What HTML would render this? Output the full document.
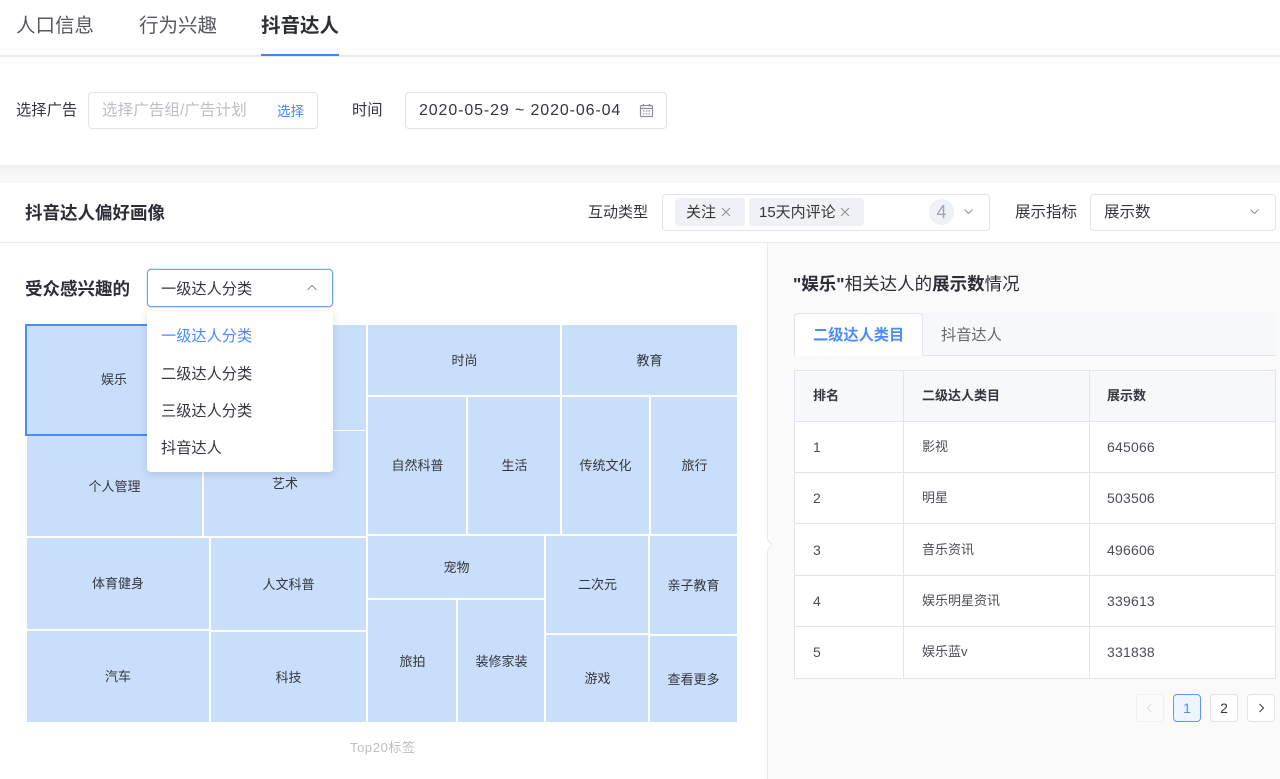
<!DOCTYPE html>
<html><head><meta charset="utf-8">
<style>
html,body{margin:0;padding:0;background:#fff}
body{width:1280px;height:779px;position:relative;overflow:hidden;font-family:"Liberation Sans","Noto Sans CJK SC",sans-serif;color:#33373d}
div,span{position:absolute;box-sizing:border-box;white-space:nowrap}
.t{line-height:20px}
.c{background:#c9defb;display:flex;align-items:center;justify-content:center;font-size:13px;color:#33373d;padding-bottom:2px}
.r{padding-left:1px}
.box{background:#fff;border:1px solid #e1e4ea;border-radius:4px}
.line{background:#e1e4ea}
.cell{font-size:13px;line-height:20px;color:#4a4e55}
.n{font-size:14px;letter-spacing:.2px}
.b{font-weight:bold}
b{font-weight:bold}
</style></head><body>
<!-- tabs -->
<div class="t" style="left:16px;top:14px;font-size:19.500px;line-height:24px;color:#55595f">人口信息</div>
<div class="t" style="left:139px;top:14px;font-size:19.500px;line-height:24px;color:#55595f">行为兴趣</div>
<div class="t b" style="left:261px;top:14px;font-size:19.500px;line-height:24px;color:#2b2f35">抖音达人</div>
<div style="left:0;top:55px;width:1280px;height:2px;background:#e9ebf0"></div>
<div style="left:261px;top:54px;width:78px;height:2px;background:#3f86fa"></div>
<!-- filter -->
<div class="t" style="left:16px;top:101px;font-size:15.300px;color:#33373d">选择广告</div>
<div class="box" style="left:88px;top:92px;width:230px;height:37px"></div>
<div class="t" style="left:102px;top:101px;font-size:15.600px;color:#bcbec2">选择广告组/广告计划</div>
<div class="t" style="left:277px;top:102px;font-size:13.500px;color:#3f86fa">选择</div>
<div class="t" style="left:352px;top:101px;font-size:15.300px;color:#33373d">时间</div>
<div class="box" style="left:405px;top:92px;width:262px;height:37px"></div>
<div class="t" style="left:419px;top:101px;font-size:16px;color:#33373d;letter-spacing:.88px">2020-05-29 ~ 2020-06-04</div>
<svg style="position:absolute;left:639px;top:103px" width="15" height="15" viewBox="0 0 15 15" fill="none" stroke="#8d9096" stroke-width="1.200"><rect x="1.500" y="2.500" width="12" height="11" rx="1"/><path d="M1.500 5.500h12M4.500 1v2.500M10.500 1v2.500M4 8h1.500M6.800 8h1.500M9.600 8h1.500M4 10.800h1.500M6.800 10.800h1.500M9.600 10.800h1.500"/></svg>
<!-- gray band -->
<div style="left:0;top:165px;width:1280px;height:18px;background:linear-gradient(#eeeff1,#f7f7f8 6px,#f8f8f9)"></div>
<!-- section header -->
<div class="t b" style="left:25px;top:202px;font-size:17.500px;color:#2b2f35;line-height:22px">抖音达人偏好画像</div>
<div class="t" style="left:588px;top:203px;font-size:15px">互动类型</div>
<div class="box" style="left:662px;top:194px;width:328px;height:37px"></div>
<div style="left:675px;top:198px;width:70px;height:28px;background:#eef1f6;border-radius:4px"></div>
<div class="t" style="left:686px;top:203px;font-size:15px">关注</div>
<svg style="position:absolute;left:721px;top:207px" width="10" height="10" viewBox="0 0 10 10" stroke="#8d9096" stroke-width="1"><path d="M1 1l8 8M9 1l-8 8"/></svg>
<div style="left:749px;top:198px;width:115px;height:28px;background:#eef1f6;border-radius:4px"></div>
<div class="t" style="left:759px;top:203px;font-size:15px">15天内评论</div>
<svg style="position:absolute;left:840px;top:207px" width="10" height="10" viewBox="0 0 10 10" stroke="#8d9096" stroke-width="1"><path d="M1 1l8 8M9 1l-8 8"/></svg>
<div style="left:929px;top:199px;width:25px;height:26px;background:#eef1f6;border-radius:13px;text-align:center;font-size:18px;line-height:26px;color:#a1a4a9">4</div>
<svg style="position:absolute;left:963px;top:208px" width="11" height="8" viewBox="0 0 11 8" fill="none" stroke="#8d9096"><path d="M1.500 1.500l4 4 4-4"/></svg>
<div class="t" style="left:1015px;top:203px;font-size:15.500px">展示指标</div>
<div class="box" style="left:1090px;top:194px;width:186px;height:37px"></div>
<div class="t" style="left:1104px;top:203px;font-size:15.500px">展示数</div>
<svg style="position:absolute;left:1249px;top:208px" width="11" height="8" viewBox="0 0 11 8" fill="none" stroke="#8d9096"><path d="M1.500 1.500l4 4 4-4"/></svg>
<div style="left:0;top:242px;width:1280px;height:1px;background:#e9ebf0"></div>
<!-- right panel bg -->
<div style="left:767px;top:243px;width:513px;height:536px;background:#fafafb;border-left:1px solid #e9ebf0"></div>
<svg style="position:absolute;left:766px;top:538px" width="8" height="14" viewBox="0 0 8 14" fill="#fff" stroke="#e9ebf0"><path d="M1 1l5 6-5 6"/></svg>
<!-- left heading -->
<div class="t b" style="left:25px;top:278px;font-size:17.500px;color:#2b2f35;line-height:22px">受众感兴趣的</div>
<!-- treemap -->
<div class="c" style="left:25px;top:324px;width:178px;height:112px;border:2px solid #4a8df8;padding-bottom:3px">娱乐</div>
<div class="c" style="left:204px;top:325px;width:162px;height:105px"></div>
<div class="c" style="left:27px;top:436px;width:175px;height:100px">个人管理</div>
<div class="c" style="left:204px;top:431px;width:162px;height:105px">艺术</div>
<div class="c" style="left:27px;top:538px;width:182px;height:91px">体育健身</div>
<div class="c" style="left:211px;top:538px;width:155px;height:92px">人文科普</div>
<div class="c" style="left:27px;top:631px;width:182px;height:91px">汽车</div>
<div class="c" style="left:211px;top:632px;width:155px;height:90px">科技</div>
<div class="c r" style="left:368px;top:325px;width:192px;height:70px">时尚</div>
<div class="c" style="left:562px;top:325px;width:175px;height:70px">教育</div>
<div class="c r" style="left:368px;top:397px;width:98px;height:137px">自然科普</div>
<div class="c r" style="left:468px;top:397px;width:92px;height:137px">生活</div>
<div class="c" style="left:562px;top:397px;width:87px;height:137px">传统文化</div>
<div class="c r" style="left:651px;top:397px;width:86px;height:137px">旅行</div>
<div class="c r" style="left:368px;top:536px;width:176px;height:62px">宠物</div>
<div class="c r" style="left:368px;top:600px;width:88px;height:122px">旅拍</div>
<div class="c r" style="left:458px;top:600px;width:86px;height:122px">装修家装</div>
<div class="c r" style="left:546px;top:536px;width:102px;height:97px">二次元</div>
<div class="c" style="left:650px;top:536px;width:87px;height:98px">亲子教育</div>
<div class="c r" style="left:546px;top:635px;width:102px;height:87px">游戏</div>
<div class="c" style="left:650px;top:636px;width:87px;height:86px">查看更多</div>
<div class="t" style="left:350px;top:738px;font-size:13px;color:#bcbec2;letter-spacing:.6px">Top20标签</div>
<!-- select + dropdown -->
<div style="left:147px;top:269px;width:186px;height:38px;background:#fff;border:1px solid #6ea4fb;border-radius:4px;box-shadow:0 0 0 1px #dbe8fd"></div>
<div class="t" style="left:161px;top:280px;font-size:15.200px">一级达人分类</div>
<svg style="position:absolute;left:306px;top:284px" width="12" height="8" viewBox="0 0 12 8" fill="none" stroke="#8d9096"><path d="M1.500 6l4.500-4.500 4.500 4.500"/></svg>
<div style="left:147px;top:311px;width:186px;height:161px;background:#fff;border-radius:4px;box-shadow:0 2px 8px rgba(40,50,70,.16)"></div>
<div class="t" style="left:161px;top:327px;font-size:15.200px;color:#4a8df8">一级达人分类</div>
<div class="t" style="left:161px;top:365px;font-size:15.200px">二级达人分类</div>
<div class="t" style="left:161px;top:402px;font-size:15.200px">三级达人分类</div>
<div class="t" style="left:161px;top:439px;font-size:15.200px">抖音达人</div>
<!-- right heading -->
<div class="t" style="left:793px;top:273px;font-size:17.500px;color:#2b2f35;line-height:22px"><b>"娱乐"</b>相关达人的<b>展示数</b>情况</div>
<!-- right tabs -->
<div style="left:794px;top:313px;width:482px;height:43px;background:#f7f8fa;border-bottom:1px solid #e1e4ea"></div>
<div style="left:794px;top:313px;width:129px;height:43px;background:#fff;border:1px solid #e1e4ea;border-bottom:0;border-radius:4px 4px 0 0"></div>
<div class="t b" style="left:813px;top:326px;font-size:15.200px;color:#4a8df8">二级达人类目</div>
<div class="t" style="left:941px;top:326px;font-size:15.200px;color:#63676d">抖音达人</div>
<!-- table -->
<div style="left:794px;top:370px;width:482px;height:309px;background:#fff;border:1px solid #e1e4ea"></div>
<div style="left:795px;top:371px;width:480px;height:50px;background:#f7f8fa"></div>
<div class="line" style="left:795px;top:421px;width:480px;height:1px"></div>
<div class="line" style="left:795px;top:472px;width:480px;height:1px"></div>
<div class="line" style="left:795px;top:523px;width:480px;height:1px"></div>
<div class="line" style="left:795px;top:575px;width:480px;height:1px"></div>
<div class="line" style="left:795px;top:626px;width:480px;height:1px"></div>
<div class="line" style="left:903px;top:371px;width:1px;height:307px"></div>
<div class="line" style="left:1089px;top:371px;width:1px;height:307px"></div>
<div class="cell b" style="left:813px;top:386px;color:#33373d">排名</div>
<div class="cell b" style="left:922px;top:386px;color:#33373d">二级达人类目</div>
<div class="cell b" style="left:1107px;top:386px;color:#33373d">展示数</div>
<div class="cell n" style="left:813px;top:437px">1</div><div class="cell" style="left:922px;top:437px">影视</div><div class="cell n" style="left:1107px;top:437px">645066</div>
<div class="cell n" style="left:813px;top:488px">2</div><div class="cell" style="left:922px;top:488px">明星</div><div class="cell n" style="left:1107px;top:488px">503506</div>
<div class="cell n" style="left:813px;top:540px">3</div><div class="cell" style="left:922px;top:540px">音乐资讯</div><div class="cell n" style="left:1107px;top:540px">496606</div>
<div class="cell n" style="left:813px;top:591px">4</div><div class="cell" style="left:922px;top:591px">娱乐明星资讯</div><div class="cell n" style="left:1107px;top:591px">339613</div>
<div class="cell n" style="left:813px;top:642px">5</div><div class="cell" style="left:922px;top:642px">娱乐蓝v</div><div class="cell n" style="left:1107px;top:642px">331838</div>
<!-- pagination -->
<div style="left:1136px;top:694px;width:28px;height:28px;border:1px solid #eeeff3;border-radius:4px;background:#fbfbfc"></div>
<svg style="position:absolute;left:1145px;top:703px" width="10" height="10" viewBox="0 0 10 10" fill="none" stroke="#dcdee2"><path d="M6.500 1l-4 4 4 4"/></svg>
<div style="left:1173px;top:694px;width:28px;height:28px;border:1px solid #5c98fa;border-radius:4px;background:#edf4fe;color:#4a8df8;font-size:14px;line-height:26px;text-align:center">1</div>
<div style="left:1210px;top:694px;width:28px;height:28px;border:1px solid #e1e4ea;border-radius:4px;background:#fff;font-size:14px;line-height:26px;text-align:center">2</div>
<div style="left:1247px;top:694px;width:28px;height:28px;border:1px solid #e1e4ea;border-radius:4px;background:#fff"></div>
<svg style="position:absolute;left:1256px;top:703px" width="10" height="10" viewBox="0 0 10 10" fill="none" stroke="#33373d"><path d="M3.500 1l4 4-4 4"/></svg>
</body></html>
